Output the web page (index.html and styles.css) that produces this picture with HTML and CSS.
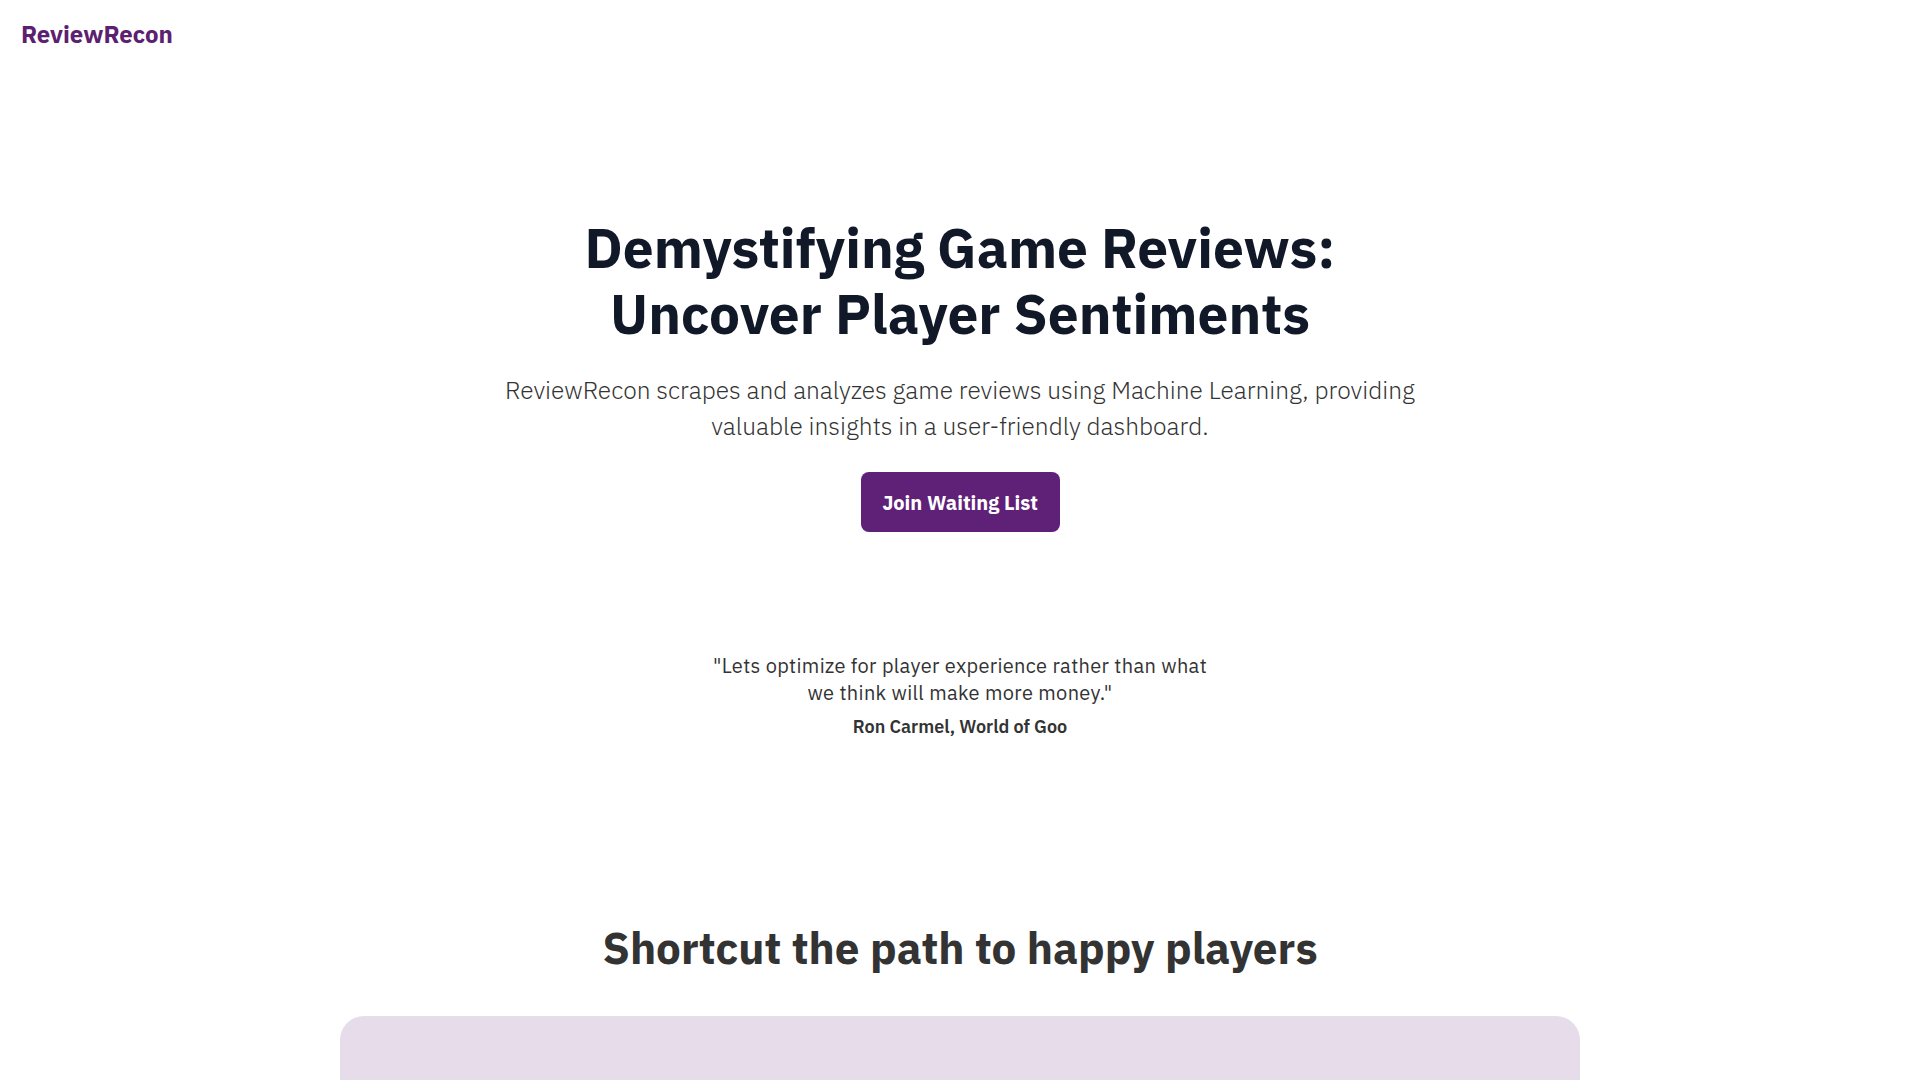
FILE: index.html
```html
<!DOCTYPE html>
<html lang="en">
<head>
    <meta charset="UTF-8">
    <meta name="viewport" content="width=device-width, initial-scale=1.0">
    <title>ReviewRecon</title>
    <link rel="stylesheet" href="styles.css">
</head>
<body>
    <header class="topbar">
        <a class="logo" href="#">ReviewRecon</a>
    </header>

    <section class="hero">
        <h1>Demystifying Game Reviews:<br>Uncover Player Sentiments</h1>
        <p class="lead">ReviewRecon scrapes and analyzes game reviews using Machine Learning, providing valuable insights in a user-friendly dashboard.</p>
        <button type="button" class="cta">Join Waiting List</button>
    </section>

    <section class="quote">
        <p class="quote-text">"Lets optimize for player experience rather than what we think will make more money."</p>
        <p class="quote-author">Ron Carmel, World of Goo</p>
    </section>

    <section class="features">
        <h2>Shortcut the path to happy players</h2>
        <div class="feature-card"></div>
    </section>
</body>
</html>
```

FILE: styles.css
```css
body {
    margin: 0;
    padding: 0;
    font-family: "IBM Plex Sans", Roboto, "Liberation Sans", sans-serif;
    color: #333;
    background-color: #fff;
}

.topbar {
    padding: 18px 21px 20px;
}

.logo {
    font-size: 24px;
    font-weight: 700;
    color: #5b2170;
    text-decoration: none;
}

.hero {
    display: flex;
    flex-direction: column;
    align-items: center;
    text-align: center;
    padding-top: 145px;
}

.hero h1 {
    margin: 0;
    font-size: 55px;
    line-height: 66px;
    font-weight: 700;
    color: #111827;
}

.lead {
    max-width: 940px;
    margin: 25px 0 0;
    font-size: 24.5px;
    line-height: 36px;
    font-weight: 300;
    color: #333;
}

.cta {
    margin-top: 28px;
    width: 199px;
    height: 60px;
    background-color: #5f2078;
    color: #fff;
    font-family: inherit;
    font-size: 20px;
    font-weight: 700;
    border: none;
    border-radius: 8px;
    cursor: pointer;
}

.quote {
    display: flex;
    flex-direction: column;
    align-items: center;
    text-align: center;
    padding-top: 120px;
}

.quote-text {
    max-width: 510px;
    margin: 0;
    font-size: 20px;
    line-height: 27px;
    letter-spacing: 0.35px;
    color: #333;
}

.quote-author {
    margin: 9px 0 0;
    font-size: 18px;
    font-weight: 600;
    color: #333;
}

.features {
    display: flex;
    flex-direction: column;
    align-items: center;
    padding-top: 180px;
}

.features h2 {
    margin: 0;
    font-size: 44px;
    line-height: 60px;
    font-weight: 700;
    color: #333;
}

.feature-card {
    width: 1240px;
    height: 400px;
    margin-top: 38px;
    background-color: #e7ddea;
    border-radius: 24px;
}
```
